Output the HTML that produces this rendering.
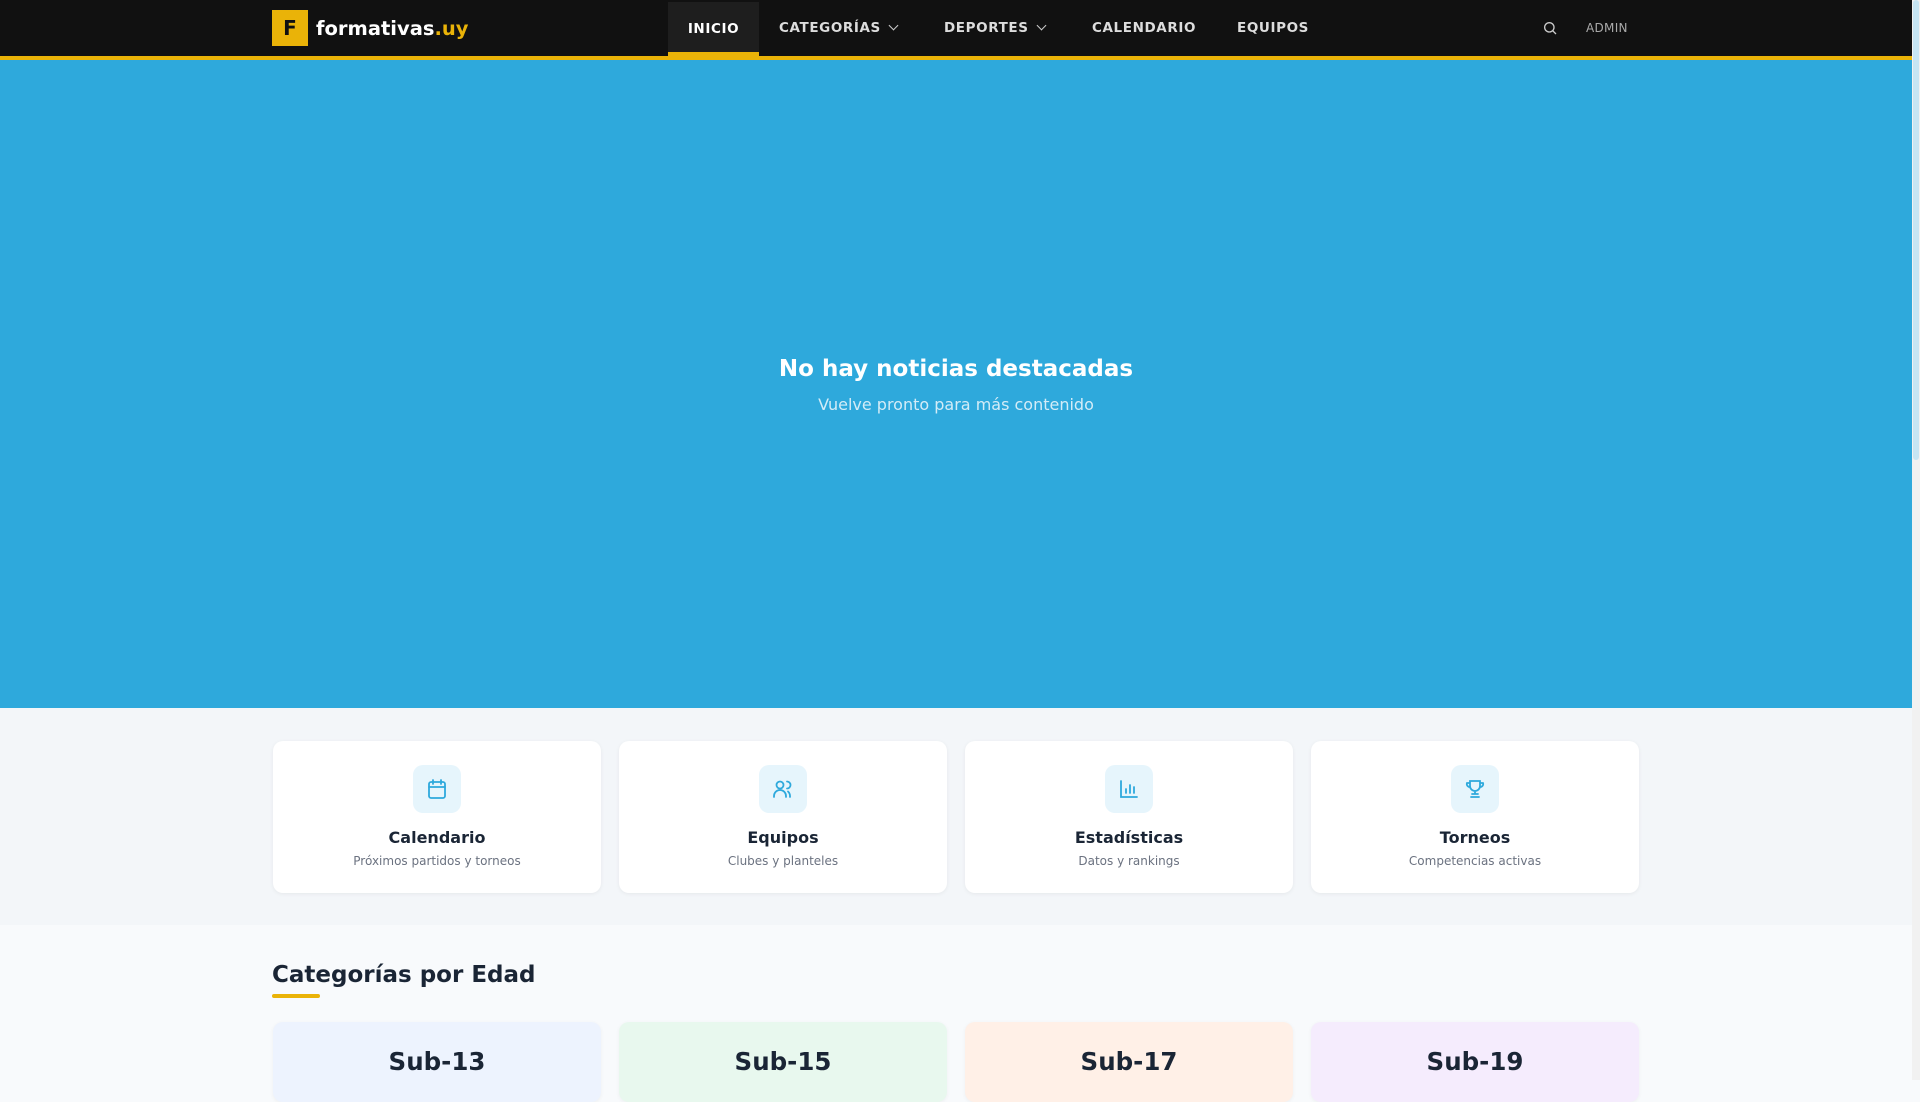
<!DOCTYPE html>
<html><head><meta charset="utf-8"><style>
*{margin:0;padding:0;box-sizing:border-box}
body{width:1920px;height:1080px;overflow:hidden;font-family:"DejaVu Sans","Liberation Sans",sans-serif;background:#f8fafc;position:relative}
.page{width:1912px;position:absolute;left:0;top:0}
.sb{position:absolute;right:0;top:0;width:8px;height:1080px;background:#f1f1f1}
.sb div{position:absolute;left:1px;top:0;width:6px;height:460px;background:#c6e5f3;border-radius:3px}
nav{background:#111;position:relative;border-bottom:4px solid #eab308;height:60px}
.logo{position:absolute;left:272px;top:10px;display:flex;align-items:center}
.logo .sq{width:36px;height:36px;background:#eab308;color:#111;font-weight:bold;font-size:20px;display:flex;align-items:center;justify-content:center}
.logo .t{margin-left:8px;color:#fff;font-weight:bold;font-size:19.5px}
.logo .t span{color:#eab308}
.nv{position:absolute;top:0;height:56px;display:flex;align-items:center;color:#ddd;font-weight:bold;font-size:13.5px;letter-spacing:.6px}
.act{left:668px;width:91px;top:2px;height:54px;background:#1e1e1e;border-bottom:4px solid #eab308;justify-content:center;color:#fff;padding-top:4px}
.chev{display:inline-block;width:7px;height:7px;border-right:1.5px solid #ccc;border-bottom:1.5px solid #ccc;transform:rotate(45deg);margin-left:9px;margin-top:-5px}
.hero{height:648px;background:#2ea9dc;text-align:center;color:#fff}
.hero h1{padding-top:296px;font-size:23px;font-weight:bold}
.hero p{margin-top:13px;font-size:16px;color:#d3ecf7}
.s1{background:#f3f6f9;height:217px;position:relative}
.card{position:absolute;top:33px;width:328px;height:152px;background:#fff;border-radius:10px;box-shadow:0 1px 4px rgba(0,0,0,.06);text-align:center}
.ib{width:48px;height:48px;border-radius:10px;background:#e6f5fc;margin:24px auto 0;display:flex;align-items:center;justify-content:center}
.card h3{font-size:16px;color:#1a2535;margin-top:15px}
.card p{font-size:12px;color:#6b7280;margin-top:7px}
.s2{position:relative;height:155px}
.s2 h2{position:absolute;left:272px;top:37px;font-size:23px;color:#1a2535}
.sub{position:absolute;top:97px;width:328px;height:80px;border-radius:10px;text-align:center;font-size:24.5px;font-weight:bold;color:#1a2535;padding-top:25px;box-shadow:0 1px 4px rgba(0,0,0,.05)}
</style></head><body>
<div class="page">
<nav>
<div class="logo"><div class="sq">F</div><div class="t">formativas<span>.uy</span></div></div>
<div class="nv act">INICIO</div>
<div class="nv" style="left:779px">CATEGORÍAS<span class="chev"></span></div>
<div class="nv" style="left:944px">DEPORTES<span class="chev"></span></div>
<div class="nv" style="left:1092px">CALENDARIO</div>
<div class="nv" style="left:1237px">EQUIPOS</div>
<div class="nv" style="left:1542px"><svg width="16" height="16" viewBox="0 0 24 24" fill="none" stroke="#ccc" stroke-width="2"><circle cx="11" cy="11" r="7"/><path d="M16 16l5 5"/></svg></div>
<div class="nv" style="left:1586px;font-weight:normal;font-size:12px;color:#aaa;letter-spacing:.3px">ADMIN</div>
</nav>
<div class="hero"><h1>No hay noticias destacadas</h1><p>Vuelve pronto para más contenido</p></div>
<div class="s1">
<div class="card" style="left:273px"><div class="ib"><svg width="24" height="24" viewBox="0 0 24 24" fill="none" stroke="#2ea9dc" stroke-width="1.8" stroke-linecap="round"><rect x="4" y="5" width="16" height="16" rx="2"/><path d="M8 3v4M16 3v4M4 10h16"/></svg></div><h3>Calendario</h3><p>Próximos partidos y torneos</p></div>
<div class="card" style="left:619px"><div class="ib"><svg width="24" height="24" viewBox="0 0 24 24" fill="none" stroke="#2ea9dc" stroke-width="1.8" stroke-linecap="round"><circle cx="9" cy="8" r="3.5"/><path d="M3 20v-1a6 6 0 0 1 12 0v1M16 4.5a3.5 3.5 0 0 1 0 7M19 20v-1a6 6 0 0 0-2-4.5"/></svg></div><h3>Equipos</h3><p>Clubes y planteles</p></div>
<div class="card" style="left:965px"><div class="ib"><svg width="24" height="24" viewBox="0 0 24 24" fill="none" stroke="#2ea9dc" stroke-width="1.8" stroke-linecap="round"><path d="M4 4v16h16M9 16v-4M13 16V8M17 16v-6"/></svg></div><h3>Estadísticas</h3><p>Datos y rankings</p></div>
<div class="card" style="left:1311px"><div class="ib"><svg width="24" height="24" viewBox="0 0 24 24" fill="none" stroke="#2ea9dc" stroke-width="1.8" stroke-linecap="round"><path d="M7 4h10v5a5 5 0 0 1-10 0zM7 6H4a3 3 0 0 0 3 4M17 6h3a3 3 0 0 1-3 4M12 14v3M8 20h8M9 17h6"/></svg></div><h3>Torneos</h3><p>Competencias activas</p></div>
</div>
<div class="s2">
<h2>Categorías por Edad</h2>
<div style="position:absolute;left:272px;top:69px;width:48px;height:4px;background:#eab308;border-radius:2px"></div>
<div class="sub" style="left:273px;background:#edf3fe">Sub-13</div>
<div class="sub" style="left:619px;background:#e8f8ee">Sub-15</div>
<div class="sub" style="left:965px;background:#fff0e7">Sub-17</div>
<div class="sub" style="left:1311px;background:#f5ecfd">Sub-19</div>
</div>
</div>
<div class="sb"><div></div></div>
</body></html>
